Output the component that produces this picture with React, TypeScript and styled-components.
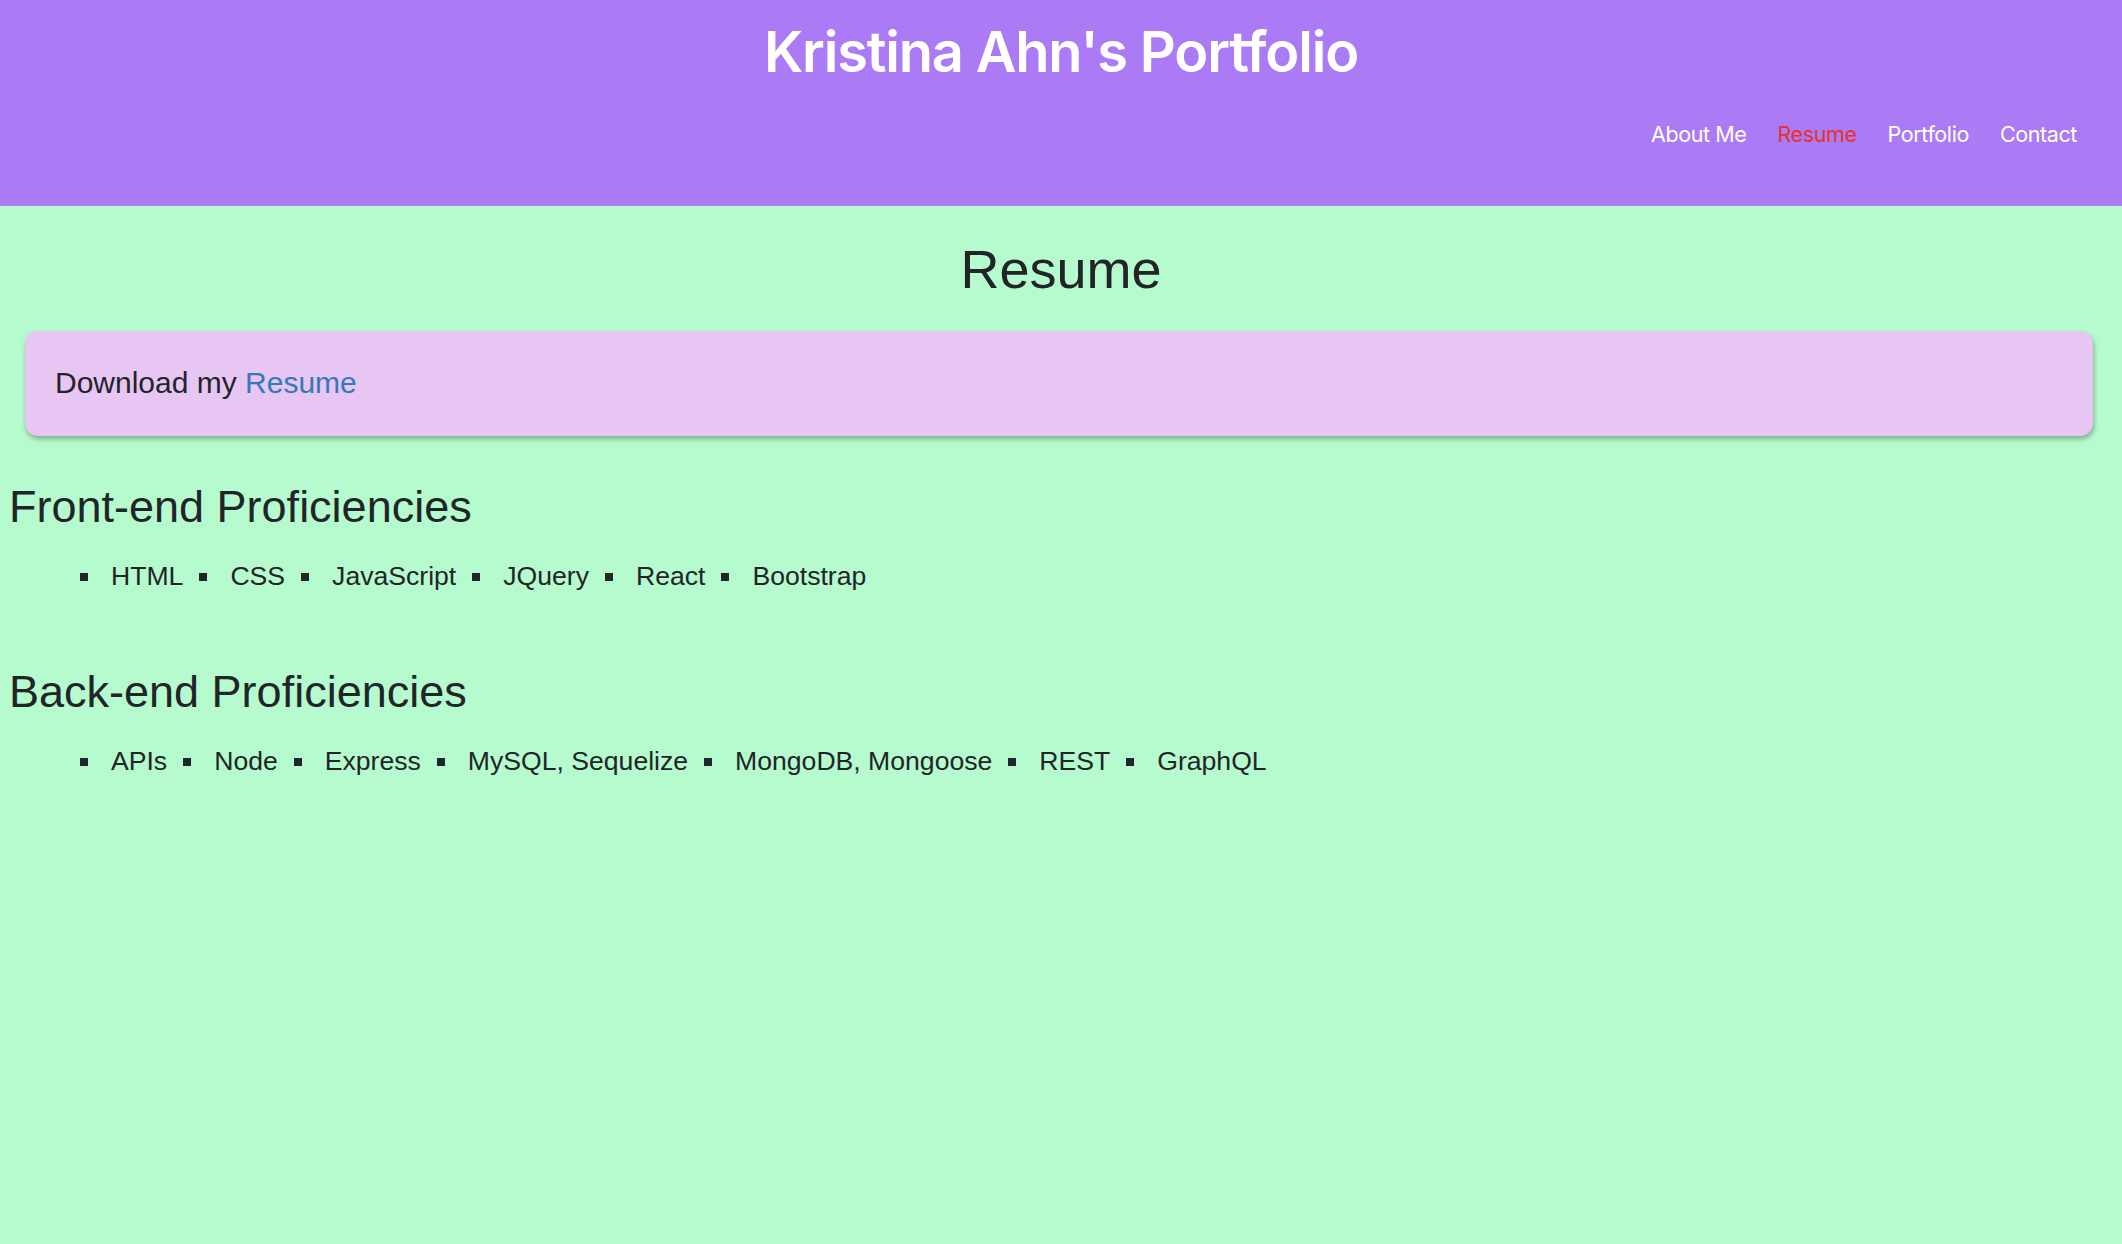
import React from "react";
import styled, { createGlobalStyle } from "styled-components";

const GlobalStyle = createGlobalStyle`
  html, body {
    margin: 0;
    padding: 0;
    background: #b5fbcd;
  }
  body {
    font-family: "Liberation Sans", Arial, Helvetica, sans-serif;
    color: #212529;
    min-height: 1244px;
  }
  * { box-sizing: border-box; }
`;

const Page = styled.div`
  min-height: 1244px;
  background: #b5fbcd;
`;

const Header = styled.header`
  height: 206px;
  background: #ab7bf6;
  display: flex;
  flex-direction: column;
`;

const SiteTitle = styled.h1`
  margin: 18px 0 0;
  font-family: Inter, "Noto Sans", sans-serif;
  font-weight: 600;
  font-size: 56px;
  line-height: 68px;
  color: #ffffff;
  text-align: center;
  letter-spacing: -1.2px;
`;

const Nav = styled.nav`
  margin-top: 34px;
  display: flex;
  justify-content: flex-end;
  gap: 31px;
  padding-right: 45px;
`;

const NavLink = styled.a<{ $active?: boolean }>`
  font-family: Inter, "Noto Sans", sans-serif;
  font-size: 21.5px;
  line-height: 28px;
  letter-spacing: -0.4px;
  color: ${(p) => (p.$active ? "#e8302a" : "#ffffff")};
  text-decoration: none;
  cursor: pointer;
`;

const Main = styled.main`
  display: flex;
  flex-direction: column;
`;

const PageHeading = styled.h2`
  margin: 31px 0 0;
  font-size: 54px;
  line-height: 64px;
  font-weight: 400;
  text-align: center;
`;

const Card = styled.div`
  margin: 30px 29px 0 25px;
  padding: 34px 30px 36px;
  background: #e8c6f3;
  border-radius: 13px;
  box-shadow: 1px 3px 5px rgba(0, 0, 0, 0.3);
  font-size: 30px;
  line-height: 35px;
`;

const Link = styled.a`
  color: #337ab7;
  text-decoration: none;
`;

const Section = styled.section<{ $top: number }>`
  margin-top: ${(p) => p.$top}px;
  padding-left: 9px;
`;

const SectionHeading = styled.h3`
  margin: 0;
  font-size: 45px;
  line-height: 53px;
  font-weight: 400;
`;

const SkillList = styled.ul`
  margin: 27px 0 0;
  padding: 0 0 0 71px;
  list-style: none;
  display: flex;
  flex-wrap: wrap;
`;

const Skill = styled.li`
  display: flex;
  align-items: baseline;
  font-size: 26.6px;
  line-height: 32px;
  margin-right: 16px;
  &::before {
    content: "";
    display: inline-block;
    width: 8px;
    height: 8px;
    background: #212529;
    margin-right: 23px;
    transform: translateY(-4px);
  }
`;

const frontEnd = ["HTML", "CSS", "JavaScript", "JQuery", "React", "Bootstrap"];
const backEnd = [
  "APIs",
  "Node",
  "Express",
  "MySQL, Sequelize",
  "MongoDB, Mongoose",
  "REST",
  "GraphQL",
];

export default function App() {
  return (
    <Page>
      <GlobalStyle />
      <Header>
        <SiteTitle>Kristina Ahn's Portfolio</SiteTitle>
        <Nav>
          <NavLink>About Me</NavLink>
          <NavLink $active>Resume</NavLink>
          <NavLink>Portfolio</NavLink>
          <NavLink>Contact</NavLink>
        </Nav>
      </Header>
      <Main>
        <PageHeading>Resume</PageHeading>
        <Card>
          Download my <Link>Resume</Link>
        </Card>
        <Section $top={44}>
          <SectionHeading>Front-end Proficiencies</SectionHeading>
          <SkillList>
            {frontEnd.map((s) => (
              <Skill key={s}>{s}</Skill>
            ))}
          </SkillList>
        </Section>
        <Section $top={73}>
          <SectionHeading>Back-end Proficiencies</SectionHeading>
          <SkillList>
            {backEnd.map((s) => (
              <Skill key={s}>{s}</Skill>
            ))}
          </SkillList>
        </Section>
      </Main>
    </Page>
  );
}
